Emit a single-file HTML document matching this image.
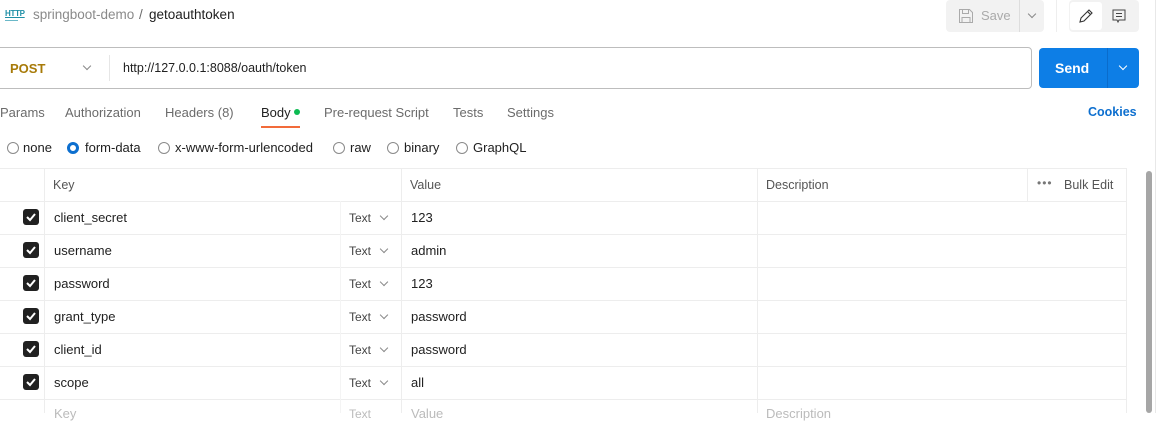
<!DOCTYPE html><html><head><style>
body{margin:0;width:1163px;height:413px;overflow:hidden;background:#fff;font-family:"Liberation Sans",sans-serif;font-size:13px;color:#212121;position:relative}
.a{position:absolute}
.t{position:absolute;white-space:nowrap}
.rad{position:absolute;width:10px;height:10px;border:1px solid #8a8a8a;border-radius:50%;top:142px}
.hl{position:absolute;left:0;width:1126px;height:1px;background:#ededed}
.vl{position:absolute;width:1px;background:#ededed}
.cb{position:absolute;left:23px;width:16px;height:16px;background:#212121;border-radius:3px}
.cb svg{position:absolute;left:2px;top:2px}
.chev{position:absolute;width:5px;height:5px;border-right:1px solid #888;border-bottom:1px solid #888;transform:rotate(45deg)}
</style></head><body>
<div class="t" style="left:5px;top:9px;font-size:8px;color:#1f8fa6;font-weight:bold;text-decoration:underline;letter-spacing:-0.3px">HTTP</div>
<div class="a" style="left:5px;top:20px;width:13px;height:1px;background:#6ab8c8"></div>
<div class="t" style="left:33px;top:7px;color:#8a8a8a;font-size:13.5px">springboot-demo</div>
<div class="t" style="left:139px;top:7px;color:#6b6b6b;font-size:13.5px">/</div>
<div class="t" style="left:149px;top:7px;color:#212121;font-size:13.5px">getoauthtoken</div>
<div class="a" style="left:946px;top:0;width:98px;height:32px;background:#f2f2f2;border-radius:4px"></div>
<div class="a" style="left:1019px;top:0;width:1px;height:32px;background:#ddd"></div>
<svg class="a" style="left:958px;top:8px" width="16" height="16" viewBox="0 0 16 16"><path d="M1.5 1.5h10l3 3v10h-13z M4.5 1.5v4h6v-4 M4 14.5v-5h8v5" fill="none" stroke="#aaa" stroke-width="1"/></svg>
<div class="t" style="left:981px;top:8px;color:#aaa;font-size:13px">Save</div>
<div class="chev" style="left:1029px;top:11px"></div>
<div class="a" style="left:1056px;top:0;width:1px;height:32px;background:#eee"></div>
<div class="a" style="left:1069px;top:0;width:70px;height:32px;background:#f2f2f2;border-radius:4px"></div>
<div class="a" style="left:1070px;top:2px;width:32px;height:28px;background:#fff;border-radius:3px"></div>
<svg class="a" style="left:1078px;top:8px" width="16" height="16" viewBox="0 0 16 16"><path d="M2 14l1-4 8-8 3 3-8 8z M9.5 3.5l3 3" fill="none" stroke="#333" stroke-width="1.1"/></svg>
<svg class="a" style="left:1111px;top:8px" width="16" height="16" viewBox="0 0 16 16"><path d="M2 2h12v10h-6l-1 2-1-2h-4z M5 5.5h6 M5 8.5h6" fill="none" stroke="#444" stroke-width="1"/></svg>
<div class="a" style="left:1155px;top:0;width:1px;height:413px;background:#e8e8e8"></div>
<div class="a" style="left:-6px;top:47px;width:1036px;height:40px;border:1px solid #bdbdbd;border-radius:4px"></div>
<div class="t" style="left:10px;top:61px;color:#a77a08;font-weight:bold;font-size:13px">POST</div>
<div class="chev" style="left:84px;top:63px"></div>
<div class="a" style="left:109px;top:55px;width:1px;height:26px;background:#e6e6e6"></div>
<div class="t" style="left:123px;top:61px;color:#212121;font-size:12.5px">http://127.0.0.1:8088/oauth/token</div>
<div class="a" style="left:1039px;top:48px;width:100px;height:40px;background:#0d7ee6;border-radius:4px"></div>
<div class="a" style="left:1107px;top:48px;width:1px;height:40px;background:#0a6ccc"></div>
<div class="t" style="left:1055px;top:60px;color:#fff;font-weight:bold;font-size:14px">Send</div>
<div class="chev" style="left:1120px;top:63px;border-color:#fff"></div>
<div class="t" style="left:0;top:105px;color:#6b6b6b">Params</div>
<div class="t" style="left:65px;top:105px;color:#6b6b6b">Authorization</div>
<div class="t" style="left:165px;top:105px;color:#6b6b6b">Headers <span style="color:#6b6b6b">(8)</span></div>
<div class="t" style="left:261px;top:105px;color:#212121">Body</div>
<div class="a" style="left:294px;top:109px;width:6px;height:6px;border-radius:50%;background:#0cbb52"></div>
<div class="a" style="left:261px;top:126px;width:39px;height:2px;background:#f26b3a"></div>
<div class="t" style="left:324px;top:105px;color:#6b6b6b">Pre-request Script</div>
<div class="t" style="left:453px;top:105px;color:#6b6b6b">Tests</div>
<div class="t" style="left:507px;top:105px;color:#6b6b6b">Settings</div>
<div class="t" style="left:1088px;top:105px;color:#0d6fcf;font-weight:bold;font-size:12.5px">Cookies</div>
<div class="rad" style="left:7px"></div><div class="t" style="left:23px;top:140px">none</div>
<div class="rad" style="left:67px;border:3px solid #0d6fcf;width:6px;height:6px"></div><div class="t" style="left:85px;top:140px">form-data</div>
<div class="rad" style="left:158px"></div><div class="t" style="left:175px;top:140px">x-www-form-urlencoded</div>
<div class="rad" style="left:333px"></div><div class="t" style="left:350px;top:140px">raw</div>
<div class="rad" style="left:387px"></div><div class="t" style="left:404px;top:140px">binary</div>
<div class="rad" style="left:456px"></div><div class="t" style="left:473px;top:140px">GraphQL</div>
<div class="hl" style="top:168px"></div>
<div class="hl" style="top:201px"></div><div class="hl" style="top:234px"></div><div class="hl" style="top:267px"></div><div class="hl" style="top:300px"></div><div class="hl" style="top:333px"></div><div class="hl" style="top:366px"></div><div class="hl" style="top:399px"></div>
<div class="vl" style="left:44px;top:168px;height:245px"></div>
<div class="vl" style="left:340px;top:201px;height:212px;background:#f4f4f4"></div>
<div class="vl" style="left:401px;top:168px;height:245px"></div>
<div class="vl" style="left:757px;top:168px;height:245px"></div>
<div class="vl" style="left:1027px;top:168px;height:33px"></div>
<div class="vl" style="left:1126px;top:168px;height:245px"></div>
<div class="a" style="left:1146px;top:171px;width:6px;height:242px;background:#a6a6a6;border-radius:3px"></div>
<div class="t" style="left:53px;top:178px;color:#555;font-size:12.5px">Key</div>
<div class="t" style="left:410px;top:178px;color:#555;font-size:12.5px">Value</div>
<div class="t" style="left:766px;top:178px;color:#555;font-size:12.5px">Description</div>
<div class="t" style="left:1037px;top:176px;color:#777;font-size:12px;letter-spacing:1px">•••</div>
<div class="t" style="left:1064px;top:178px;color:#555;font-size:12.5px">Bulk Edit</div>
<div class="cb" style="top:209px"><svg width="12" height="12"><path d="M2 6l3 3 5-6" stroke="#fff" stroke-width="2" fill="none"/></svg></div>
<div class="t" style="left:54px;top:210px">client_secret</div><div class="t" style="left:349px;top:211px;color:#444;font-size:12px">Text</div><div class="chev" style="left:381px;top:213px"></div><div class="t" style="left:411px;top:210px">123</div>
<div class="cb" style="top:242px"><svg width="12" height="12"><path d="M2 6l3 3 5-6" stroke="#fff" stroke-width="2" fill="none"/></svg></div>
<div class="t" style="left:54px;top:243px">username</div><div class="t" style="left:349px;top:244px;color:#444;font-size:12px">Text</div><div class="chev" style="left:381px;top:246px"></div><div class="t" style="left:411px;top:243px">admin</div>
<div class="cb" style="top:275px"><svg width="12" height="12"><path d="M2 6l3 3 5-6" stroke="#fff" stroke-width="2" fill="none"/></svg></div>
<div class="t" style="left:54px;top:276px">password</div><div class="t" style="left:349px;top:277px;color:#444;font-size:12px">Text</div><div class="chev" style="left:381px;top:279px"></div><div class="t" style="left:411px;top:276px">123</div>
<div class="cb" style="top:308px"><svg width="12" height="12"><path d="M2 6l3 3 5-6" stroke="#fff" stroke-width="2" fill="none"/></svg></div>
<div class="t" style="left:54px;top:309px">grant_type</div><div class="t" style="left:349px;top:310px;color:#444;font-size:12px">Text</div><div class="chev" style="left:381px;top:312px"></div><div class="t" style="left:411px;top:309px">password</div>
<div class="cb" style="top:341px"><svg width="12" height="12"><path d="M2 6l3 3 5-6" stroke="#fff" stroke-width="2" fill="none"/></svg></div>
<div class="t" style="left:54px;top:342px">client_id</div><div class="t" style="left:349px;top:343px;color:#444;font-size:12px">Text</div><div class="chev" style="left:381px;top:345px"></div><div class="t" style="left:411px;top:342px">password</div>
<div class="cb" style="top:374px"><svg width="12" height="12"><path d="M2 6l3 3 5-6" stroke="#fff" stroke-width="2" fill="none"/></svg></div>
<div class="t" style="left:54px;top:375px">scope</div><div class="t" style="left:349px;top:376px;color:#444;font-size:12px">Text</div><div class="chev" style="left:381px;top:378px"></div><div class="t" style="left:411px;top:375px">all</div>
<div class="t" style="left:54px;top:406px;color:#bbb">Key</div><div class="t" style="left:349px;top:407px;color:#bbb;font-size:12px">Text</div><div class="t" style="left:411px;top:406px;color:#bbb">Value</div><div class="t" style="left:766px;top:406px;color:#bbb">Description</div>
</body></html>
